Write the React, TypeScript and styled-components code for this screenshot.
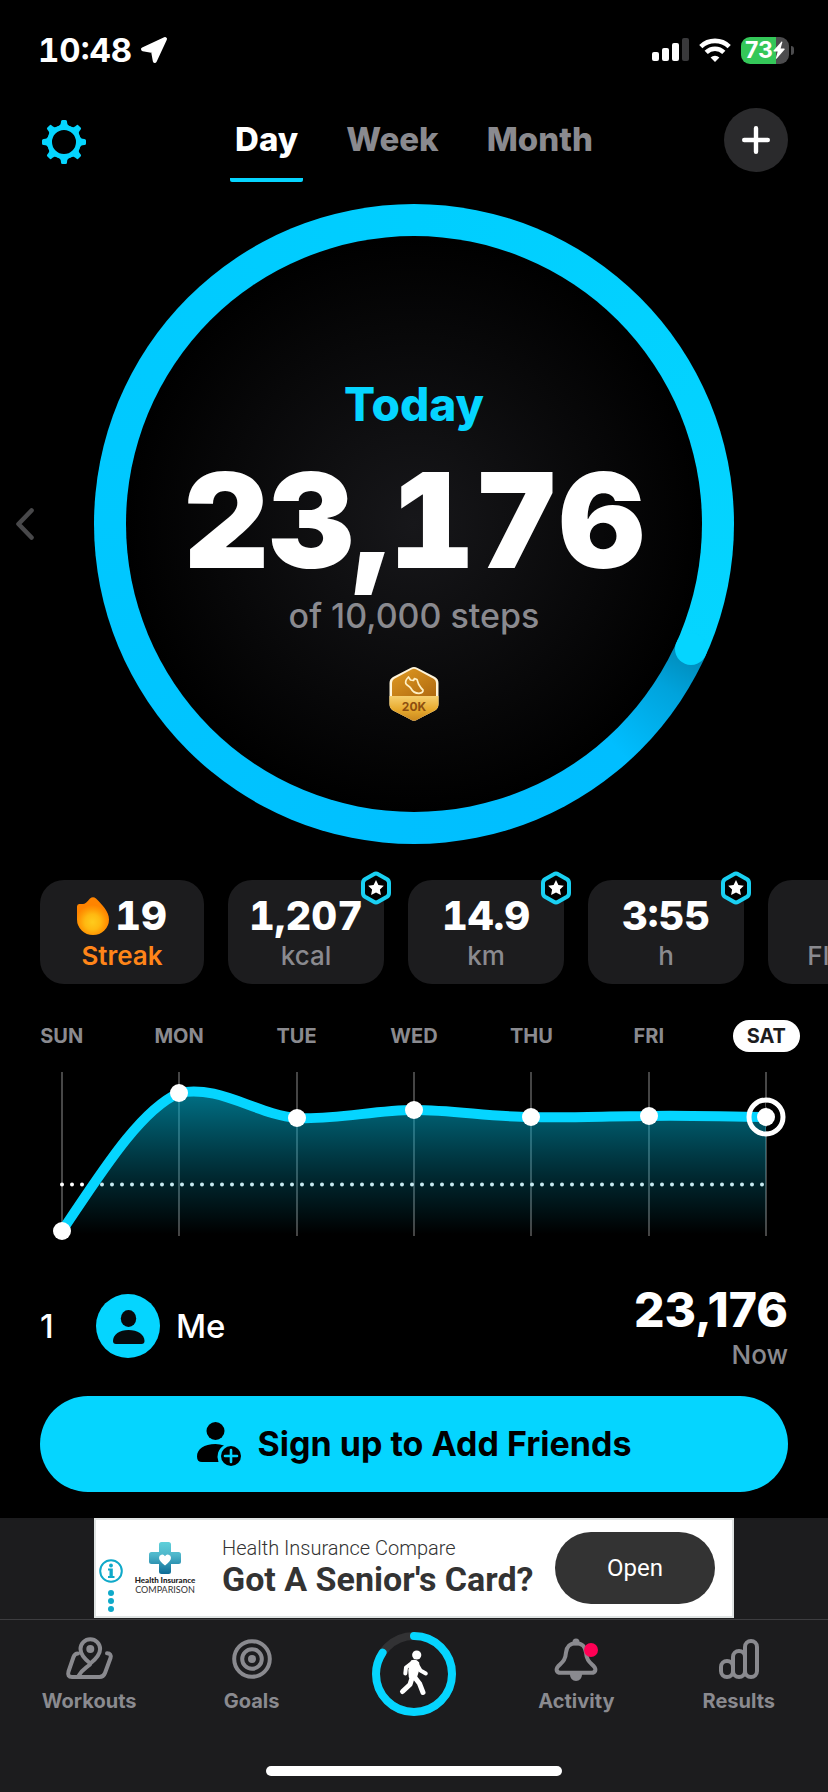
import React from 'react';
import styled, { createGlobalStyle } from 'styled-components';

const accent = '#05d5ff';
const muted = '#8a8a8f';

const GlobalStyle = createGlobalStyle`
  * { box-sizing: border-box; }
  body {
    margin: 0;
    background: #000;
    color: #fff;
    font-family: Inter, 'Liberation Sans', sans-serif;
    overflow-x: hidden;
  }
  button {
    margin: 0;
    padding: 0;
    border: 0;
    background: none;
    color: inherit;
    font: inherit;
    cursor: pointer;
  }
  a { color: inherit; text-decoration: none; }
  svg { display: block; }
`;

const Page = styled.div`
  display: flex;
  flex-direction: column;
  min-height: 100vh;
  overflow: hidden;
`;

/* ---------- status bar ---------- */

const StatusBar = styled.div`
  display: flex;
  align-items: center;
  justify-content: space-between;
  height: 100px;
  padding: 0 34px 0 38px;
`;

const Clock = styled.div`
  display: flex;
  align-items: center;
  gap: 8px;
  font-size: 33px;
  line-height: 40px;
  font-weight: 700;
  font-variant-numeric: tabular-nums;
`;

const Indicators = styled.div`
  display: flex;
  align-items: center;
  gap: 10px;
`;

const BatteryWrap = styled.div`
  display: flex;
  align-items: center;
  gap: 2px;
`;

const BatteryBody = styled.div`
  display: flex;
  align-items: center;
  justify-content: center;
  width: 48px;
  height: 27px;
  border-radius: 9px;
  background: linear-gradient(90deg, #34c759 73%, #4c4c4e 73%);
  font-size: 23px;
  line-height: 27px;
  font-weight: 700;
`;

const BatteryCap = styled.span`
  width: 3px;
  height: 9px;
  border-radius: 0 4px 4px 0;
  background: #4c4c4e;
`;

/* ---------- header ---------- */

const Header = styled.header`
  display: grid;
  grid-template-columns: 1fr auto 1fr;
  align-items: start;
  padding: 8px 40px 0;
`;

const GearButton = styled.button`
  display: grid;
  place-items: center;
  width: 48px;
  height: 68px;
`;

const Tabs = styled.nav`
  display: flex;
  gap: 38px;
`;

const Tab = styled.button<{ $active?: boolean }>`
  padding: 10px 5px 18px;
  border-bottom: 4px solid ${(p) => (p.$active ? accent : 'transparent')};
  border-radius: 2px;
  color: ${(p) => (p.$active ? '#fff' : muted)};
  font-size: 33px;
  line-height: 42px;
  font-weight: 800;
`;

const AddButton = styled.button`
  display: grid;
  place-items: center;
  justify-self: end;
  width: 64px;
  height: 64px;
  border-radius: 50%;
  background: #2a2a2c;
`;

/* ---------- progress ring ---------- */

const RingSection = styled.section`
  display: grid;
  grid-template-columns: 94px minmax(0, 1fr) 94px;
  align-items: center;
  margin-top: 22px;
`;

const PrevButton = styled.button`
  padding: 20px 15px;
  justify-self: start;
`;

const Ring = styled.div`
  position: relative;
  aspect-ratio: 1;
  border-radius: 50%;
  background: conic-gradient(
    from 114deg,
    #0088b5 0deg,
    #00a3dc 9deg,
    #00beff 24deg,
    #00c0ff 70deg,
    #00c8ff 156deg,
    #00ceff 246deg,
    ${accent} 360deg
  );
`;

const RingHead = styled.svg`
  position: absolute;
  inset: 0;
  width: 100%;
  height: 100%;
`;

const RingContent = styled.div`
  position: absolute;
  inset: 32px;
  display: flex;
  flex-direction: column;
  align-items: center;
  padding-top: 140px;
  border-radius: 50%;
  background: radial-gradient(circle closest-side, #17171a, #000);
`;

const RingTitle = styled.h1`
  margin: 0;
  color: ${accent};
  font-size: 46px;
  line-height: 56px;
  font-weight: 800;
`;

const RingValue = styled.div`
  margin-top: 28px;
  font-size: 132px;
  line-height: 120px;
  font-weight: 900;
  font-variant-numeric: tabular-nums;
  white-space: nowrap;
`;

const RingGoal = styled.p`
  margin: 16px 0 30px;
  color: ${muted};
  font-size: 34px;
  line-height: 40px;
  font-weight: 500;
`;

/* ---------- stat cards ---------- */

const Stats = styled.section`
  display: flex;
  gap: 24px;
  margin-top: 36px;
  padding-left: 40px;
`;

const StatCard = styled.button<{ $wide?: boolean }>`
  position: relative;
  display: flex;
  flex: none;
  flex-direction: column;
  align-items: center;
  width: ${(p) => (p.$wide ? 164 : 156)}px;
  height: 104px;
  padding-top: 16px;
  border-radius: 24px;
  background: #1c1c1e;
`;

const StatValue = styled.span`
  display: flex;
  align-items: center;
  gap: 6px;
  height: 40px;
  font-size: 40px;
  line-height: 40px;
  font-weight: 800;
  font-variant-numeric: tabular-nums;
`;

const StatLabel = styled.span<{ $hot?: boolean }>`
  margin-top: 4px;
  color: ${(p) => (p.$hot ? '#ff8519' : muted)};
  font-size: 26px;
  line-height: 32px;
  font-weight: ${(p) => (p.$hot ? 600 : 500)};
`;

const StatBadge = styled.span`
  position: absolute;
  top: -9px;
  right: -8px;
`;

/* ---------- week chart ---------- */

const Days = styled.div`
  display: grid;
  grid-template-columns: repeat(7, 1fr);
  justify-items: center;
  margin-top: 36px;
  padding: 0 3px;
`;

const Day = styled.button<{ $active?: boolean }>`
  padding: 0 14px;
  border-radius: 16px;
  background: ${(p) => (p.$active ? '#fff' : 'transparent')};
  color: ${(p) => (p.$active ? '#1c1c1e' : muted)};
  font-size: 20px;
  line-height: 32px;
  font-weight: 700;
`;

const Chart = styled.svg`
  width: 100%;
  margin-top: 8px;
`;

/* ---------- leaderboard ---------- */

const Leader = styled.section`
  display: flex;
  align-items: flex-start;
  margin-top: 36px;
  padding: 0 40px;
  font-size: 33px;
  line-height: 64px;
`;

const Person = styled.div`
  display: flex;
  flex: 1;
  align-items: center;
  padding-top: 8px;
  font-weight: 500;
`;

const Rank = styled.span`
  width: 56px;
`;

const Avatar = styled.span`
  width: 64px;
  height: 64px;
  margin-right: 16px;
  border-radius: 50%;
  background: ${accent};
`;

const Score = styled.div`
  text-align: right;
`;

const ScoreValue = styled.div`
  font-size: 48px;
  line-height: 48px;
  font-weight: 800;
`;

const ScoreTime = styled.div`
  color: ${muted};
  font-size: 26px;
  line-height: 42px;
  font-weight: 500;
`;

const SignUp = styled.button`
  display: flex;
  align-items: center;
  justify-content: center;
  gap: 16px;
  height: 96px;
  margin: 20px 40px 26px;
  border-radius: 48px;
  background: ${accent};
  color: #000;
  font-size: 34px;
  line-height: 40px;
  font-weight: 700;
`;

/* ---------- footer ---------- */

const Footer = styled.footer`
  flex: 1;
  background: #1c1c1e;
`;

const Ad = styled.aside`
  display: flex;
  align-items: center;
  height: 100px;
  margin: 0 94px 1px;
  padding: 0 17px 0 3px;
  border: 2px solid #dfe3e3;
  background: #fff;
  color: #333;
  font-family: Roboto, sans-serif;
`;

const AdChoices = styled.a`
  align-self: flex-end;
  padding-bottom: 3px;
`;

const AdLogo = styled.div`
  display: flex;
  flex-direction: column;
  align-items: center;
  width: 68px;
  margin: 0 23px 0 8px;
  font-family: Lato, sans-serif;
  font-size: 8px;
  line-height: 9px;
  white-space: nowrap;
`;

const AdBrand = styled.strong`
  margin-top: 2px;
  color: #222;
  font-weight: 900;
`;

const AdBrandSub = styled.span`
  font-size: 9px;
`;

const AdCopy = styled.div`
  flex: 1;
  padding-bottom: 4px;
  white-space: nowrap;
`;

const AdLine = styled.div`
  font-size: 20px;
  line-height: 26px;
  font-weight: 300;
`;

const AdTitle = styled.div`
  font-size: 34px;
  line-height: 36px;
  font-weight: 700;
`;

const AdButton = styled.button`
  width: 160px;
  height: 72px;
  border-radius: 36px;
  background: #333;
  color: #fff;
  font-size: 24px;
`;

const TabBar = styled.nav`
  display: grid;
  grid-template-columns: repeat(5, 1fr);
  padding: 12px 8px 0;
  border-top: 1px solid #3d3d40;
`;

const TabItem = styled.a`
  display: flex;
  flex-direction: column;
  align-items: center;
  gap: 5px;
  color: ${muted};
  font-size: 20px;
  line-height: 24px;
  font-weight: 700;
`;

const HomeIndicator = styled.div`
  width: 296px;
  height: 10px;
  margin: 50px auto 16px;
  border-radius: 5px;
  background: #fff;
`;

/* ---------- icons ---------- */

const LocationIcon = () => (
  <svg width="28" height="28" viewBox="0 0 28 28" fill="#fff" stroke="#fff" strokeWidth="4" strokeLinejoin="round">
    <path d="M25 3 3 13.200 13 15 14.800 25Z" />
  </svg>
);

const SignalIcon = () => (
  <svg width="37" height="24" viewBox="0 0 37 24" fill="#fff">
    <rect x="0" y="14" width="7" height="9" rx="2" />
    <rect x="10" y="10" width="7" height="13" rx="2" />
    <rect x="20" y="5" width="7" height="18" rx="2" />
    <rect x="30" y="0" width="7" height="23" rx="2" fill="#39393b" />
  </svg>
);

const WifiIcon = () => (
  <svg width="32" height="24" viewBox="0 0 32 24" fill="none" stroke="#fff" strokeWidth="4.600">
    <path d="M1.800 8.600a20.400 20.400 0 0 1 28.400 0" />
    <path d="M7.200 14.400a12.600 12.600 0 0 1 17.600 0" />
    <path d="M16 24l-4.400-4.600a6.400 6.400 0 0 1 8.800 0Z" fill="#fff" stroke="none" />
  </svg>
);

const BoltIcon = () => (
  <svg width="12" height="18" viewBox="0 0 12 18" fill="#fff">
    <path d="M8.600.5.6 9.600q-.5.9.5.9h3.600L2.900 17.200q.2.9.9.2l7.800-9q.5-.9-.5-.9H7.600L9.400 1Q9.300.1 8.600.5Z" />
  </svg>
);

const GearIcon = () => (
  <svg width="44" height="44" viewBox="-22 -22 44 44" fill={accent}>
    <circle r="14.500" fill="none" stroke={accent} strokeWidth="5" />
    {[0, 45, 90, 135, 180, 225, 270, 315].map((a) => (
      <path
        key={a}
        transform={`rotate(${a})`}
        d="M-6.500-15C-4-16.500-3-17.500-3-20.400Q-3-22-1.500-22H1.500Q3-22 3-20.400C3-17.500 4-16.500 6.500-15Z"
      />
    ))}
  </svg>
);

const PlusIcon = () => (
  <svg width="28" height="28" viewBox="0 0 28 28" stroke="#fff" strokeWidth="4.400" strokeLinecap="round">
    <path d="M14 2.200V25.800M2.200 14H25.800" />
  </svg>
);

const ChevronIcon = () => (
  <svg width="20" height="34" viewBox="0 0 20 34" fill="none" stroke="#48484a" strokeWidth="4.600" strokeLinecap="round" strokeLinejoin="round">
    <path d="M16.500 3.500 3.500 17 16.500 30.500" />
  </svg>
);

const Medal = () => (
  <svg width="52" height="56" viewBox="0 0 52 56">
    <defs>
      <linearGradient id="medalTop" x1="0" x2="1" y1="0" y2="1">
        <stop offset="0" stopColor="#e09a22" />
        <stop offset="1" stopColor="#b06a10" />
      </linearGradient>
      <linearGradient id="medalBottom" x1="0" x2="0" y1="0" y2="1">
        <stop offset="0" stopColor="#f6cf6e" />
        <stop offset=".5" stopColor="#e8ac30" />
        <stop offset="1" stopColor="#c8841c" />
      </linearGradient>
      <clipPath id="medalShape">
        <path d="M22.500 2Q26 0 29.500 2L47 11Q50.500 13 50.500 17V38Q50.500 42 47 44.500L29.500 53.500Q26 56 22.500 53.500L5 44.500Q1.500 42 1.500 38V17Q1.500 13 5 11Z" />
      </clipPath>
    </defs>
    <g clipPath="url(#medalShape)">
      <rect width="52" height="56" fill="#fff4d8" />
      <path d="M23.500 3.500Q26 2 28.500 3.500L46 13Q48 14.500 48 17V30H4V17Q4 14.500 6 13Z" fill="url(#medalTop)" />
      <rect y="30" width="52" height="26" fill="url(#medalBottom)" />
    </g>
    <path
      d="M20.500 11C18 13.500 17 15 17.800 17.500C19 19.500 21.500 20 23 22.500C24.500 25.500 27 27.300 31 27.300Q35.500 26.800 35 24C33 22.500 32 20.500 30.500 18L29 13.500L26.500 12.500L25.500 14.500L22.500 14Z"
      fill="none"
      stroke="#fff0c4"
      strokeWidth="1.700"
      strokeLinejoin="round"
    />
    <text x="26" y="45" textAnchor="middle" fill="#8d4f10" fontSize="12" fontWeight="700">20K</text>
  </svg>
);

const FlameIcon = () => (
  <svg width="32" height="38" viewBox="0 0 32 38">
    <defs>
      <radialGradient id="flame" gradientUnits="userSpaceOnUse" cx="15.500" cy="25" r="17">
        <stop offset="0" stopColor="#ffcb1c" />
        <stop offset=".45" stopColor="#ffb911" />
        <stop offset=".75" stopColor="#ff9a05" />
        <stop offset="1" stopColor="#ff8400" />
      </radialGradient>
    </defs>
    <path d="M0 9.500Q0 6.800 2.500 7H6Q8.500 7 13 1.500Q16-1 19 1.500C25 7.500 32 14.500 32 22.500A16 15.500 0 0 1 0 22.500Z" fill="url(#flame)" />
  </svg>
);

const StarHex = () => (
  <svg width="32" height="34" viewBox="0 0 32 34">
    <path
      d="M13.800 3.200Q16 1.800 18.200 3.200L27 8.200Q29 9.500 29 12V22Q29 24.500 27 25.800L18.200 30.800Q16 32.200 13.800 30.800L5 25.800Q3 24.500 3 22V12Q3 9.500 5 8.200Z"
      fill="#000"
      stroke="#1ad0f2"
      strokeWidth="4"
    />
    <path d="M16 9l2.400 5 5.400.7-3.900 3.800 1 5.500-4.900-2.600-4.900 2.600 1-5.500-3.900-3.800 5.400-.7Z" fill="#fff" />
  </svg>
);

const PersonIcon = () => (
  <svg width="64" height="64" viewBox="0 0 64 64" fill="#060a0c">
    <ellipse cx="32.500" cy="24.500" rx="7.700" ry="8.500" />
    <path d="M17 47C17 40.500 23.500 36 32.500 36S48.500 40.500 48.500 47Q48.500 50 45.500 50H20Q17 50 17 47Z" />
  </svg>
);

const AddFriendIcon = () => (
  <svg width="45" height="45" viewBox="0 0 45 45">
    <circle cx="18.500" cy="9" r="9" />
    <path d="M0 34.500C0 27 7 22 18.500 22Q23 22 27 23.500A13 13 0 0 0 21.500 40H5Q0 40 0 34.500Z" />
    <circle cx="34" cy="34" r="10" />
    <path d="M34 28v12M28 34h12" stroke={accent} strokeWidth="2.600" strokeLinecap="round" />
  </svg>
);

const AdChoicesIcon = () => (
  <svg width="24" height="54" viewBox="0 0 24 54" fill="#0fa9c9">
    <circle cx="12" cy="12" r="10.800" fill="none" stroke="#0fa9c9" strokeWidth="2" />
    <circle cx="12" cy="6.500" r="1.900" />
    <path d="M9 9.500h4.800v7.500h1.700v2H9v-2h1.500v-5.500H9Z" />
    <circle cx="12" cy="34" r="3" />
    <circle cx="12" cy="42" r="3" />
    <circle cx="12" cy="50" r="3" />
  </svg>
);

const HealthCross = () => (
  <svg width="32" height="32" viewBox="0 0 32 32">
    <defs>
      <linearGradient id="cross" x1="0" x2="0" y1="0" y2="1">
        <stop offset="0" stopColor="#5fd0da" />
        <stop offset=".4" stopColor="#4fb7cb" />
        <stop offset="1" stopColor="#0b6b96" />
      </linearGradient>
    </defs>
    <path d="M12.500 0H19.500Q22 0 22 2.500V10H29.500Q32 10 32 12.500V19.500Q32 22 29.500 22H22V29.500Q22 32 19.500 32H12.500Q10 32 10 29.500V22H2.500Q0 22 0 19.500V12.500Q0 10 2.500 10H10V2.500Q10 0 12.500 0Z" fill="url(#cross)" />
    <path d="M16 23.500C12.500 20.500 10 18.500 10 15.700A3.200 3.200 0 0 1 16 14.200A3.200 3.200 0 0 1 22 15.700C22 18.500 19.500 20.500 16 23.500Z" fill="#fff" />
  </svg>
);

const NavIcon = styled.svg.attrs({ width: 52, height: 52, viewBox: '0 0 52 52' })`
  fill: none;
  stroke: ${muted};
  stroke-width: 4;
  stroke-linecap: round;
  stroke-linejoin: round;
  .solid { fill: ${muted}; stroke: none; }
`;

const WorkoutsIcon = () => (
  <NavIcon>
    <path d="M27.300 31.500C21.500 27 17.500 22.500 17.500 17A9.800 9.800 0 0 1 37.100 17C37.100 22.500 33 27 27.300 31.500Z" />
    <circle className="solid" cx="27.300" cy="17" r="4" />
    <path d="M15 21.500Q11.700 21.500 10.500 25L5.500 39.500Q4 45 9 45H36.500Q40.500 45 42 41L47.500 26Q48.800 21.500 44 21.300M27 32.500C22.500 36.500 19 37.500 15.500 44" />
  </NavIcon>
);

const GoalsIcon = () => (
  <NavIcon>
    <circle cx="26" cy="27" r="17.800" />
    <circle cx="26" cy="27" r="9.800" />
    <circle className="solid" cx="26" cy="27" r="4" />
  </NavIcon>
);

const ActivityIcon = () => (
  <NavIcon>
    <circle className="solid" cx="26" cy="10" r="3.500" />
    <path d="M26 11.200C20 11.200 16.500 15 16 20.500C15.500 28 12.500 30 8 34.500C5.500 37.500 6.500 40.800 10.500 40.800H41.500C45.500 40.800 46.500 37.500 44 34.500C39.500 30 36.500 28 36 20.500C35.500 15 32 11.200 26 11.200Z" />
    <path className="solid" d="M19.800 42H32.200Q31.500 49 26 49T19.800 42Z" />
    <circle cx="41" cy="18" r="7" fill="#ff0055" stroke="none" />
  </NavIcon>
);

const ResultsIcon = () => (
  <NavIcon>
    <rect x="8" y="29" width="12" height="16" rx="6" />
    <rect x="20" y="19" width="12" height="26" rx="6" />
    <rect x="32" y="9" width="12" height="36" rx="6" />
  </NavIcon>
);

const WalkIcon = () => (
  <svg width="84" height="84" viewBox="0 0 84 84" fill="none" strokeLinecap="round" strokeLinejoin="round">
    <circle cx="42" cy="42" r="38" stroke="#323234" strokeWidth="8" />
    <circle
      cx="42"
      cy="42"
      r="38"
      stroke={accent}
      strokeWidth="8"
      pathLength="1000"
      strokeDasharray="845 155"
      transform="rotate(-90 42 42)"
    />
    <circle cx="44.700" cy="23" r="4.600" fill="#fff" />
    <path d="M40 29.500Q43.500 28 46 31L46 38 43.500 46 38 45 37.500 38Z" fill="#fff" stroke="#fff" strokeWidth="2.500" />
    <path d="M40.500 30.500 34 35.500 33.300 41.500" stroke="#fff" strokeWidth="4" />
    <path d="M45 32.500 48.500 38.500 53.800 41.500" stroke="#fff" strokeWidth="4" />
    <path d="M40 46 38 52.500 30.500 59.500" stroke="#fff" strokeWidth="5" />
    <path d="M42 44.500 47.500 51.500 51 60.500" stroke="#fff" strokeWidth="5" />
  </svg>
);

/* ---------- data ---------- */

const days = ['SUN', 'MON', 'TUE', 'WED', 'THU', 'FRI', 'SAT'];

const points = [
  { x: 62, y: 171 },
  { x: 179, y: 33 },
  { x: 297, y: 58 },
  { x: 414, y: 50 },
  { x: 531, y: 57 },
  { x: 649, y: 56 },
  { x: 766, y: 57 },
];

const curve =
  'M62 171C101 113 140 50 179 33C218 24 258 55 297 58C336 60 375 50 414 50C453 50 492 57 531 57C570 58 610 56 649 56C688 55 727 57 766 57';

const stats = [
  { value: '1,207', label: 'kcal' },
  { value: '14.9', label: 'km' },
  { value: '3:55', label: 'h' },
];

function WeekChart() {
  return (
    <Chart viewBox="0 0 828 190" role="img" aria-label="Steps this week">
      <defs>
        <linearGradient id="area" gradientUnits="userSpaceOnUse" x1="0" x2="0" y1="30" y2="174">
          <stop offset="0" stopColor="#00b4d6" stopOpacity=".64" />
          <stop offset=".62" stopColor="#00a0c0" stopOpacity=".24" />
          <stop offset="1" stopColor="#00a0c0" stopOpacity="0" />
        </linearGradient>
      </defs>
      {points.map((p, i) => (
        <line
          key={p.x}
          x1={p.x}
          x2={p.x}
          y1="12"
          y2="176"
          stroke={i % 6 ? '#8a8a8a' : '#474747'}
          strokeWidth={i % 6 ? 1 : 2}
        />
      ))}
      <line x1="62" x2="765" y1="124.500" y2="124.500" stroke="#fff" strokeWidth="4" strokeLinecap="round" strokeDasharray="0 10" />
      <path d={`${curve}V176H62Z`} fill="url(#area)" />
      <path d={curve} fill="none" stroke={accent} strokeWidth="10" />
      {points.map((p) => (
        <circle key={p.x} cx={p.x} cy={p.y} r="9" fill="#fff" />
      ))}
      <circle cx="766" cy="57" r="17" fill="none" stroke="#fff" strokeWidth="5" />
      <path d="M766 45A12 12 0 0 1 766 69" fill="none" stroke="#000" strokeWidth="4" />
    </Chart>
  );
}

export default function App() {
  return (
    <Page>
      <GlobalStyle />
      <StatusBar>
        <Clock>
          10:48
          <LocationIcon />
        </Clock>
        <Indicators>
          <SignalIcon />
          <WifiIcon />
          <BatteryWrap>
            <BatteryBody>
              73
              <BoltIcon />
            </BatteryBody>
            <BatteryCap />
          </BatteryWrap>
        </Indicators>
      </StatusBar>

      <Header>
        <GearButton aria-label="Settings">
          <GearIcon />
        </GearButton>
        <Tabs>
          <Tab $active>Day</Tab>
          <Tab>Week</Tab>
          <Tab>Month</Tab>
        </Tabs>
        <AddButton aria-label="Add">
          <PlusIcon />
        </AddButton>
      </Header>

      <RingSection>
        <PrevButton aria-label="Previous day">
          <ChevronIcon />
        </PrevButton>
        <Ring>
          <RingContent>
            <RingTitle>Today</RingTitle>
            <RingValue>23,176</RingValue>
            <RingGoal>of 10,000 steps</RingGoal>
            <Medal />
          </RingContent>
          <RingHead viewBox="0 0 640 640" aria-hidden="true">
            <circle cx="597" cy="445" r="16" fill={accent} />
          </RingHead>
        </Ring>
      </RingSection>

      <Stats>
        <StatCard $wide>
          <StatValue>
            <FlameIcon />
            19
          </StatValue>
          <StatLabel $hot>Streak</StatLabel>
        </StatCard>
        {stats.map((s) => (
          <StatCard key={s.label}>
            <StatValue>{s.value}</StatValue>
            <StatLabel>{s.label}</StatLabel>
            <StatBadge>
              <StarHex />
            </StatBadge>
          </StatCard>
        ))}
        <StatCard>
          <StatValue />
          <StatLabel>Floors</StatLabel>
        </StatCard>
      </Stats>

      <Days>
        {days.map((d) => (
          <Day key={d} $active={d === 'SAT'}>
            {d}
          </Day>
        ))}
      </Days>
      <WeekChart />

      <Leader>
        <Person>
          <Rank>1</Rank>
          <Avatar>
            <PersonIcon />
          </Avatar>
          Me
        </Person>
        <Score>
          <ScoreValue>23,176</ScoreValue>
          <ScoreTime>Now</ScoreTime>
        </Score>
      </Leader>

      <SignUp>
        <AddFriendIcon />
        Sign up to Add Friends
      </SignUp>

      <Footer>
        <Ad>
          <AdChoices href="#ad" aria-label="Ad choices">
            <AdChoicesIcon />
          </AdChoices>
          <AdLogo>
            <HealthCross />
            <AdBrand>Health Insurance</AdBrand>
            <AdBrandSub>COMPARISON</AdBrandSub>
          </AdLogo>
          <AdCopy>
            <AdLine>Health Insurance Compare</AdLine>
            <AdTitle>Got A Senior's Card?</AdTitle>
          </AdCopy>
          <AdButton>Open</AdButton>
        </Ad>
        <TabBar>
          <TabItem href="#workouts">
            <WorkoutsIcon />
            Workouts
          </TabItem>
          <TabItem href="#goals">
            <GoalsIcon />
            Goals
          </TabItem>
          <TabItem href="#steps" aria-label="Steps">
            <WalkIcon />
          </TabItem>
          <TabItem href="#activity">
            <ActivityIcon />
            Activity
          </TabItem>
          <TabItem href="#results">
            <ResultsIcon />
            Results
          </TabItem>
        </TabBar>
        <HomeIndicator />
      </Footer>
    </Page>
  );
}
